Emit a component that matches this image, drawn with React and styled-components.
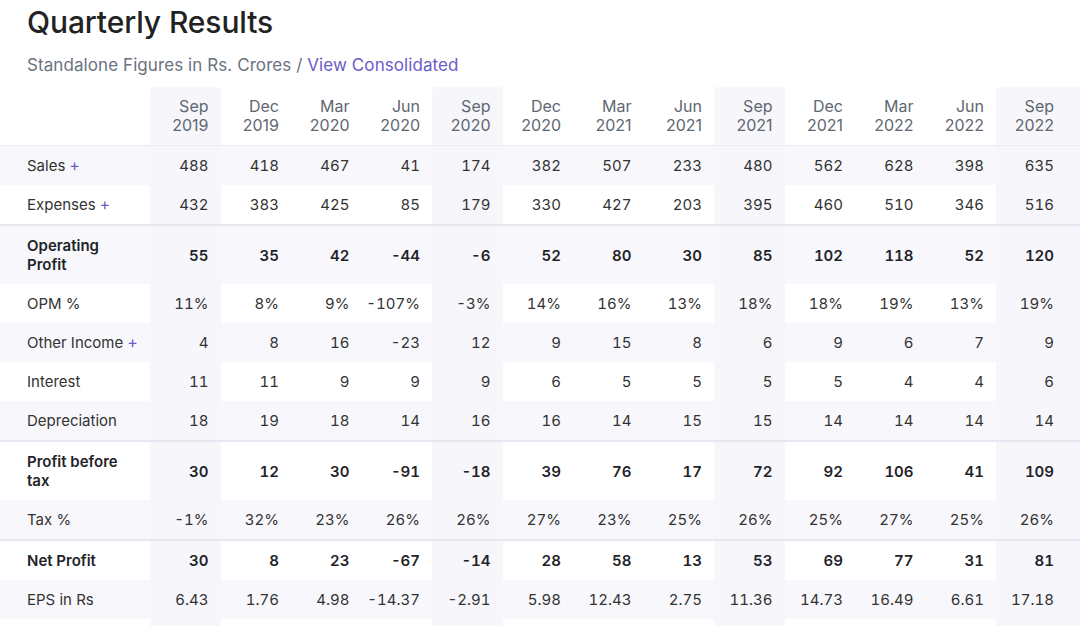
import React from "react";
import styled, { createGlobalStyle } from "styled-components";

const Global = createGlobalStyle`
  html, body { margin: 0; padding: 0; background: #fff; }
  body {
    font-family: Inter, "Noto Sans", sans-serif;
    color: #222;
    overflow: hidden;
    width: 1080px;
    height: 626px;
  }
  *, *::before, *::after { box-sizing: border-box; }
`;

const Page = styled.div`
  width: 1080px;
  height: 626px;
  overflow: hidden;
`;

const Header = styled.div`
  padding: 4px 27px 0;
`;

const Title = styled.h2`
  margin: 0;
  font-size: 30px;
  font-weight: 500;
  line-height: 36px;
  color: #222;
  letter-spacing: -0.1px;
`;

const Sub = styled.p`
  margin: 14px 0 0;
  font-size: 17px;
  line-height: 22px;
  color: #6b7280;
  letter-spacing: 0.08px;
`;

const Link = styled.a`
  color: #6a5bc7;
  text-decoration: none;
`;

const Table = styled.table`
  margin-top: 11px;
  border-collapse: collapse;
  table-layout: fixed;
  width: ${150 + 12 * 70.5 + 100}px;
  font-size: 15px;
`;

const HeadCell = styled.th`
  width: ${(p) => (p.$label ? "150px" : p.$last ? "100px" : "70.5px")};
  padding: 10px ${(p) => (p.$last ? "42px" : "12px")} 10px 6px;
  text-align: right;
  font-size: 16px;
  font-weight: 400;
  line-height: 19px;
  color: #5f6771;
  vertical-align: top;
  background: ${(p) => (p.$hl ? "#f6f6fb" : "transparent")};
  border-radius: 4px 4px 0 0;
`;

const HeadRow = styled.tr`
  border-bottom: 1px solid #e9ecf3;
`;

const Row = styled.tr`
  background: ${(p) => (p.$stripe ? "#f8f8fc" : "#fff")};
  border-top: ${(p) => (p.$sep ? "2px solid #e3e8f1" : "0")};
`;

const LabelCell = styled.td`
  padding: 10px 10px 10px 27px;
  text-align: left;
  line-height: 19px;
  white-space: ${(p) => (p.$bold ? "normal" : "nowrap")};
  font-weight: ${(p) => (p.$bold ? 600 : 400)};
  color: ${(p) => (p.$bold ? "#1f2328" : "#333")};
`;

const Plus = styled.span`
  color: #6a5bc7;
  font-size: 16px;
  margin-left: 4px;
`;

const Cell = styled.td`
  padding: 10px ${(p) => (p.$last ? "42px" : "12px")} 10px 4px;
  text-align: right;
  line-height: 19px;
  vertical-align: middle;
  white-space: nowrap;
  font-variant-numeric: tabular-nums;
  font-feature-settings: "tnum";
  font-weight: ${(p) => (p.$bold ? 600 : 400)};
  color: ${(p) => (p.$bold ? "#1f2328" : "#333")};
  background: ${(p) => (p.$hl ? "#f6f6fb" : "transparent")};
`;

const cols = [
  ["Sep", "2019"], ["Dec", "2019"], ["Mar", "2020"], ["Jun", "2020"],
  ["Sep", "2020"], ["Dec", "2020"], ["Mar", "2021"], ["Jun", "2021"],
  ["Sep", "2021"], ["Dec", "2021"], ["Mar", "2022"], ["Jun", "2022"],
  ["Sep", "2022"],
];

const rows = [
  { label: "Sales", plus: true, v: ["488","418","467","41","174","382","507","233","480","562","628","398","635"] },
  { label: "Expenses", plus: true, v: ["432","383","425","85","179","330","427","203","395","460","510","346","516"] },
  { label: "Operating Profit", bold: true, sep: true, v: ["55","35","42","-44","-6","52","80","30","85","102","118","52","120"] },
  { label: "OPM %", v: ["11%","8%","9%","-107%","-3%","14%","16%","13%","18%","18%","19%","13%","19%"] },
  { label: "Other Income", plus: true, v: ["4","8","16","-23","12","9","15","8","6","9","6","7","9"] },
  { label: "Interest", v: ["11","11","9","9","9","6","5","5","5","5","4","4","6"] },
  { label: "Depreciation", v: ["18","19","18","14","16","16","14","15","15","14","14","14","14"] },
  { label: "Profit before tax", bold: true, sep: true, v: ["30","12","30","-91","-18","39","76","17","72","92","106","41","109"] },
  { label: "Tax %", v: ["-1%","32%","23%","26%","26%","27%","23%","25%","26%","25%","27%","25%","26%"] },
  { label: "Net Profit", bold: true, sep: true, v: ["30","8","23","-67","-14","28","58","13","53","69","77","31","81"] },
  { label: "EPS in Rs", v: ["6.43","1.76","4.98","-14.37","-2.91","5.98","12.43","2.75","11.36","14.73","16.49","6.61","17.18"] },
];

export default function App() {
  return (
    <Page>
      <Global />
      <Header>
        <Title>Quarterly Results</Title>
        <Sub>
          Standalone Figures in Rs. Crores / <Link href="#">View Consolidated</Link>
        </Sub>
      </Header>
      <Table>
        <thead>
          <HeadRow>
            <HeadCell $label />
            {cols.map(([m, y], i) => (
              <HeadCell key={i} $hl={i % 4 === 0} $last={i === cols.length - 1}>
                {m}
                <br />
                {y}
              </HeadCell>
            ))}
          </HeadRow>
        </thead>
        <tbody>
          {rows.map((r, ri) => (
            <Row key={r.label} $stripe={ri % 2 === 0} $sep={r.sep}>
              <LabelCell $bold={r.bold}>
                {r.label}
                {r.plus && <Plus>+</Plus>}
              </LabelCell>
              {r.v.map((val, i) => (
                <Cell key={i} $bold={r.bold} $hl={i % 4 === 0} $last={i === r.v.length - 1}>
                  {val}
                </Cell>
              ))}
            </Row>
          ))}
          <Row $stripe={false}>
            <LabelCell>&nbsp;</LabelCell>
            {cols.map((c, i) => (
              <Cell key={i} $hl={i % 4 === 0} $last={i === cols.length - 1}>&nbsp;</Cell>
            ))}
          </Row>
        </tbody>
      </Table>
    </Page>
  );
}
